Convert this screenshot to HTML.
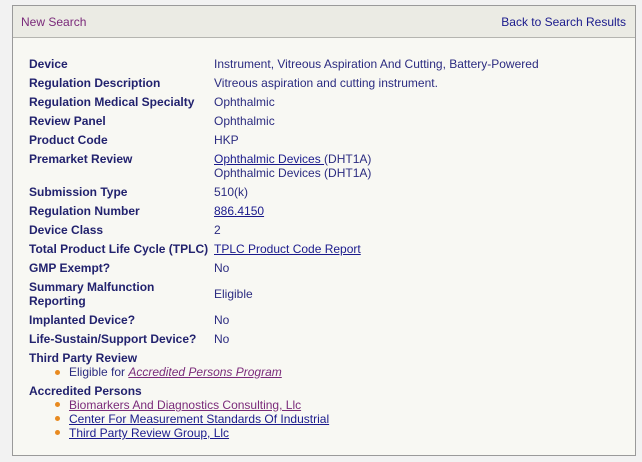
<!DOCTYPE html><html><head><style>
body{margin:0;background:#f2f2f2;font-family:"Liberation Sans",sans-serif;font-size:12px;color:#2b2b80;}
.box{position:absolute;left:12px;top:5px;width:622px;height:449px;border:1px solid #9a9a9a;background:#f8f8f3;}
.hdr{position:absolute;left:0;top:0;right:0;height:31px;background:#ebebe4;border-bottom:1px solid #b5b5b0;}
.hdr span{position:absolute;top:9px;}
.r{position:absolute;left:16px;white-space:nowrap;}
.l{position:absolute;left:16px;font-weight:bold;color:#22226e;white-space:nowrap;}
.v{position:absolute;left:201px;white-space:nowrap;}
a{color:#1a1a8c;text-decoration:underline}
a.p{color:#7a2a7a}
.b{position:absolute;left:42px;width:5px;height:5px;border-radius:50%;background:#e88a20;}
</style></head><body><div class="box">
<div class="hdr"><span style="left:8px;color:#7a2a7a">New Search</span><span style="right:9px;color:#1a1a8c">Back to Search Results</span></div>
<div class="l" style="top:51px">Device</div><div class="v" style="top:51px">Instrument, Vitreous Aspiration And Cutting, Battery-Powered</div>
<div class="l" style="top:70px">Regulation Description</div><div class="v" style="top:70px">Vitreous aspiration and cutting instrument.</div>
<div class="l" style="top:89px">Regulation Medical Specialty</div><div class="v" style="top:89px">Ophthalmic</div>
<div class="l" style="top:108px">Review Panel</div><div class="v" style="top:108px">Ophthalmic</div>
<div class="l" style="top:127px">Product Code</div><div class="v" style="top:127px">HKP</div>
<div class="l" style="top:146px">Premarket Review</div><div class="v" style="top:146px"><a>Ophthalmic Devices </a>(DHT1A)<br>Ophthalmic Devices (DHT1A)</div>
<div class="l" style="top:179px">Submission Type</div><div class="v" style="top:179px">510(k)</div>
<div class="l" style="top:198px">Regulation Number</div><div class="v" style="top:198px"><a>886.4150</a></div>
<div class="l" style="top:217px">Device Class</div><div class="v" style="top:217px">2</div>
<div class="l" style="top:236px">Total Product Life Cycle (TPLC)</div><div class="v" style="top:236px"><a>TPLC Product Code Report</a></div>
<div class="l" style="top:255px">GMP Exempt?</div><div class="v" style="top:255px">No</div>
<div class="l" style="top:274px;line-height:14px">Summary Malfunction<br>Reporting</div><div class="v" style="top:281px">Eligible</div>
<div class="l" style="top:307px">Implanted Device?</div><div class="v" style="top:307px">No</div>
<div class="l" style="top:326px">Life-Sustain/Support Device?</div><div class="v" style="top:326px">No</div>
<div class="l" style="top:345px">Third Party Review</div>
<div class="b" style="top:364px"></div><div class="r" style="left:56px;top:359px">Eligible for <a class="p"><i>Accredited Persons Program</i></a></div>
<div class="l" style="top:378px">Accredited Persons</div>
<div class="b" style="top:396px"></div><div class="r" style="left:56px;top:392px"><a class="p">Biomarkers And Diagnostics Consulting, Llc</a></div>
<div class="b" style="top:410px"></div><div class="r" style="left:56px;top:406px"><a>Center For Measurement Standards Of Industrial</a></div>
<div class="b" style="top:424px"></div><div class="r" style="left:56px;top:420px"><a>Third Party Review Group, Llc</a></div>
</div></body></html>
